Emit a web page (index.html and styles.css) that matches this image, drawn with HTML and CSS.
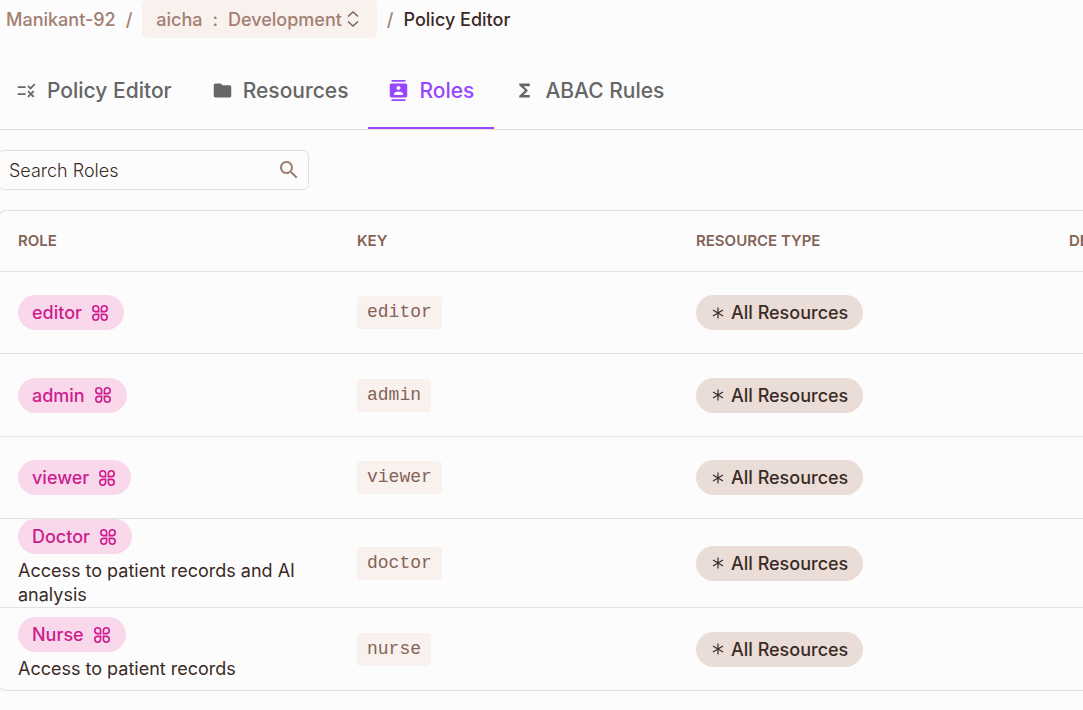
FILE: index.html
```html
<!DOCTYPE html>
<html lang="en">
<head>
    <meta charset="UTF-8">
    <meta name="viewport" content="width=device-width, initial-scale=1.0">
    <title>Policy Editor - Roles</title>
    <link rel="stylesheet" href="styles.css">
</head>
<body>
    <!-- Shared icons -->
    <svg class="sprite" aria-hidden="true">
        <symbol id="command" viewBox="0 0 16 16">
            <path d="M6.600 6.600H3.700A2.900 2.900 0 0 1 .8 3.700A2.900 2.900 0 0 1 3.700 .8A2.900 2.900 0 0 1 6.600 3.700ZM9.400 6.600V3.700A2.900 2.900 0 0 1 12.300 .8A2.900 2.900 0 0 1 15.200 3.700A2.900 2.900 0 0 1 12.300 6.600ZM6.600 9.400V12.300A2.900 2.900 0 0 1 3.700 15.200A2.900 2.900 0 0 1 .8 12.300A2.900 2.900 0 0 1 3.700 9.400ZM9.400 9.400H12.300A2.900 2.900 0 0 1 15.200 12.300A2.900 2.900 0 0 1 12.300 15.200A2.900 2.900 0 0 1 9.400 12.300Z" fill="none" stroke="currentColor" stroke-width="1.6"/>
        </symbol>
        <symbol id="asterisk" viewBox="0 0 12 12">
            <path d="M6 .5v11M1 3l10 6M11 3L1 9" fill="none" stroke="currentColor" stroke-width="1.2"/>
        </symbol>
    </svg>

    <!-- Breadcrumb -->
    <nav class="breadcrumb" aria-label="Breadcrumb">
        <a href="#">Manikant-92</a>
        <span class="slash">/</span>
        <button type="button" class="env-switch">
            <span>aicha</span>
            <span class="colon">:</span>
            <span>Development</span>
            <svg width="12" height="16" viewBox="0 0 12 16"><path d="M1 5.500L6 1l5 4.500M1 10.500L6 15l5-4.500" fill="none" stroke="currentColor" stroke-width="1.600"/></svg>
        </button>
        <span class="slash">/</span>
        <span class="current">Policy Editor</span>
    </nav>

    <!-- Tabs -->
    <nav class="tabs" aria-label="Sections">
        <a href="#" class="tab">
            <svg viewBox="0 0 24 24"><path d="M16.540 11L13 7.460l1.410-1.410 2.120 2.120 4.240-4.240 1.410 1.410L16.540 11zM11 7H2v2h9V7zm10 6.410L19.590 12 17 14.590 14.410 12 13 13.410 15.590 16 13 18.590 14.410 20 17 17.410 19.590 20 21 18.590 18.410 16 21 13.410zM11 15H2v2h9v-2z"/></svg>
            Policy Editor
        </a>
        <a href="#" class="tab">
            <svg viewBox="0 0 24 24"><path d="M10 4H4c-1.100 0-1.990.9-1.990 2L2 18c0 1.100.9 2 2 2h16c1.100 0 2-.9 2-2V8c0-1.100-.9-2-2-2h-8l-2-2z"/></svg>
            Resources
        </a>
        <a href="#" class="tab active">
            <svg viewBox="0 0 24 24"><path d="M20 0H4v2h16V0zM4 24h16v-2H4v2zM20 4H4c-1.100 0-2 .9-2 2v12c0 1.100.9 2 2 2h16c1.100 0 2-.9 2-2V6c0-1.100-.9-2-2-2zm-8 2.750c1.240 0 2.250 1.010 2.250 2.250s-1.010 2.250-2.250 2.250S9.750 10.240 9.750 9 10.760 6.750 12 6.750zM17 17H7v-1.500c0-1.670 3.330-2.500 5-2.500s5 .83 5 2.500V17z"/></svg>
            Roles
        </a>
        <a href="#" class="tab">
            <svg viewBox="0 0 24 24"><path d="M18 4H6v2l6.500 6L6 18v2h12v-3h-7l5-5-5-5h7z"/></svg>
            ABAC Rules
        </a>
    </nav>

    <main>
        <!-- Search -->
        <form class="search">
            <input type="text" id="search" aria-label="Search Roles" placeholder="Search Roles">
            <button type="button" aria-label="Search">
                <svg width="24" height="24" viewBox="0 0 24 24"><path d="M15.500 14h-.79l-.28-.27C15.410 12.590 16 11.110 16 9.500 16 5.910 13.090 3 9.500 3S3 5.910 3 9.500 5.910 16 9.500 16c1.610 0 3.090-.59 4.230-1.570l.27.28v.79l5 4.990L20.490 19l-4.990-5zm-6 0C7.010 14 5 11.990 5 9.500S7.010 5 9.500 5 14 7.010 14 9.500 11.990 14 9.500 14z"/></svg>
            </button>
        </form>

        <!-- Roles table -->
        <div class="table-box">
            <table>
                <thead>
                    <tr>
                        <th class="col-role">Role</th>
                        <th class="col-key">Key</th>
                        <th class="col-type">Resource Type</th>
                        <th class="col-more">De</th>
                    </tr>
                </thead>
                <tbody>
                    <tr>
                        <td><span class="chip role">editor <svg><use href="#command"/></svg></span></td>
                        <td><code>editor</code></td>
                        <td><span class="chip type"><svg><use href="#asterisk"/></svg>All Resources</span></td>
                        <td></td>
                    </tr>
                    <tr>
                        <td><span class="chip role">admin <svg><use href="#command"/></svg></span></td>
                        <td><code>admin</code></td>
                        <td><span class="chip type"><svg><use href="#asterisk"/></svg>All Resources</span></td>
                        <td></td>
                    </tr>
                    <tr>
                        <td><span class="chip role">viewer <svg><use href="#command"/></svg></span></td>
                        <td><code>viewer</code></td>
                        <td><span class="chip type"><svg><use href="#asterisk"/></svg>All Resources</span></td>
                        <td></td>
                    </tr>
                    <tr>
                        <td>
                            <span class="chip role">Doctor <svg><use href="#command"/></svg></span>
                            <p>Access to patient records and AI analysis</p>
                        </td>
                        <td><code>doctor</code></td>
                        <td><span class="chip type"><svg><use href="#asterisk"/></svg>All Resources</span></td>
                        <td></td>
                    </tr>
                    <tr>
                        <td>
                            <span class="chip role">Nurse <svg><use href="#command"/></svg></span>
                            <p>Access to patient records</p>
                        </td>
                        <td><code>nurse</code></td>
                        <td><span class="chip type"><svg><use href="#asterisk"/></svg>All Resources</span></td>
                        <td></td>
                    </tr>
                </tbody>
            </table>
        </div>
    </main>
</body>
</html>
```
FILE: styles.css
```css
* {
    box-sizing: border-box;
}

body {
    margin: 0;
    background-color: #fcfcfc;
    color: #3b2a26;
    font-family: Inter, "Liberation Sans", sans-serif;
    font-size: 18px;
    overflow-x: hidden;
}

a {
    color: inherit;
    text-decoration: none;
}

button {
    font: inherit;
    color: inherit;
    border: none;
    background: none;
    padding: 0;
    cursor: pointer;
}

svg {
    fill: currentColor;
    flex-shrink: 0;
}

.sprite {
    display: none;
}

/* Breadcrumb */
.breadcrumb {
    display: flex;
    align-items: center;
    gap: 10px;
    height: 38px;
    padding-left: 6px;
    color: #a18072;
    font-weight: 500;
    white-space: nowrap;
}

.env-switch {
    display: flex;
    align-items: center;
    height: 38px;
    padding: 0 18px 0 14px;
    border-radius: 5px;
    background-color: #f9f1ee;
}

.colon {
    margin: 0 10px;
}

.env-switch svg {
    margin-left: 5px;
    color: #846358;
}

.current {
    color: #3b2a26;
}

/* Tabs */
.tabs {
    display: flex;
    height: 92px;
    margin-left: -4px;
    padding-top: 16px;
    border-bottom: 1px solid #eaddd7;
}

.tab {
    display: flex;
    align-items: center;
    gap: 10px;
    padding: 0 20px;
    border-bottom: 2px solid transparent;
    color: #666;
    font-size: 21px;
    font-weight: 500;
    white-space: nowrap;
}

.tab svg {
    width: 21px;
    height: 21px;
}

.tab.active {
    color: #9747ff;
    border-bottom-color: #9747ff;
}

main {
    margin-left: -2px;
    padding: 20px 0;
}

/* Search */
.search {
    display: flex;
    align-items: center;
    width: 311px;
    height: 40px;
    margin-bottom: 20px;
    padding: 0 7px 0 10px;
    border: 1px solid #eaddd7;
    border-radius: 6px;
}

.search input {
    flex: 1;
    min-width: 0;
    padding: 0;
    border: none;
    outline: none;
    background: none;
    font: inherit;
    font-weight: 300;
}

.search input::placeholder {
    color: #3b2a26;
    opacity: 1;
}

.search button {
    display: flex;
    color: #a18072;
}

/* Table */
.table-box {
    overflow: hidden;
    border: 1px solid #eaddd7;
    border-right: none;
    border-radius: 8px 0 0 8px;
}

table {
    width: 100%;
    table-layout: fixed;
    border-spacing: 0;
}

.col-role,
.col-key {
    width: 339px;
}

.col-type {
    width: 373px;
}

th {
    height: 61px;
    padding: 0 0 2px 19px;
    border-bottom: 1px solid #e2e2e2;
    color: #846358;
    font-size: 15px;
    font-weight: 600;
    text-align: left;
    text-transform: uppercase;
    white-space: nowrap;
}

td {
    height: 82px;
    padding: 0 19px;
    border-bottom: 1px solid #e2e2e2;
    vertical-align: middle;
}

tr:nth-child(even) td {
    height: 83px;
}

tr:last-child td {
    border-bottom: none;
}

td p {
    margin: 5px 0 0;
    line-height: 24px;
}

.chip {
    display: flex;
    align-items: center;
    width: fit-content;
    height: 35px;
    border-radius: 18px;
    font-weight: 500;
    white-space: nowrap;
}

.role {
    gap: 10px;
    padding: 0 16px 0 14px;
    background-color: #f9d8ec;
    color: #cd1d8d;
}

.role svg {
    width: 16px;
    height: 16px;
}

.type {
    gap: 7px;
    padding: 0 15px 0 16px;
    background-color: #eaddd7;
    color: #3b2a26;
}

.type svg {
    width: 12px;
    height: 12px;
}

code {
    display: block;
    width: fit-content;
    padding: 0 10px;
    border-radius: 4px;
    background-color: #f9f1ee;
    color: #846358;
    font-family: "Liberation Mono", monospace;
    font-size: 18px;
    line-height: 33px;
}
```
